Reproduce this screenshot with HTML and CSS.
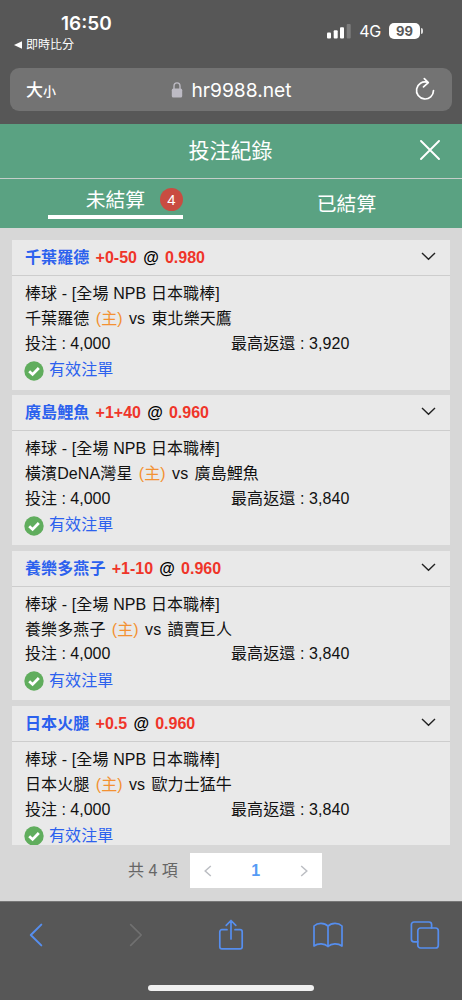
FILE: index.html
```html
<!DOCTYPE html>
<html lang="zh-Hant">
<head>
<meta charset="utf-8">
<meta name="viewport" content="width=device-width, initial-scale=1">
<title>投注紀錄</title>
<link rel="stylesheet" href="styles.css">
</head>
<body>
<div class="phone">
  <header class="browser-top">
    <div class="status">
      <div class="status-left">
        <div class="clock">16:50</div>
        <div class="back-app"><svg width="8" height="8" viewBox="0 0 8 8"><path d="M0 4 8 .3v7.4z" fill="#fff"/></svg><span>即時比分</span></div>
      </div>
      <div class="status-right">
        <svg class="signal" width="24" height="15" viewBox="0 0 24 15"><g fill="#fff"><rect y="8.5" width="4" height="6" rx="1"/><rect x="6.7" y="6.2" width="4" height="8.3" rx="1"/><rect x="13" y="3.3" width="4" height="11.2" rx="1"/></g><rect x="19.7" width="4" height="14.5" rx="1" fill="#7d7d7d"/></svg>
        <span class="network">4G</span>
        <span class="battery">99</span><span class="battery-tip"></span>
      </div>
    </div>
    <div class="address">
      <div class="text-size"><span>大</span><small>小</small></div>
      <div class="site">
        <svg width="12" height="16" viewBox="0 0 12 16"><rect x=".8" y="6.6" width="10.4" height="8.9" rx="1.6" fill="#bdbbc4"/><path d="M3 7V4.200a3 3.300 0 0 1 6 0V7" fill="none" stroke="#bdbbc4" stroke-width="1.4"/></svg>
        <span>hr9988.net</span>
      </div>
      <svg class="reload" width="20" height="24" viewBox="0 0 20 24"><path d="M12.300 5.300A8.500 8.500 0 1 0 18.500 13.500M9.300 1.600l4 4-4.800 4.300" fill="none" stroke="#fff" stroke-width="1.7" stroke-linecap="round" stroke-linejoin="round"/></svg>
    </div>
  </header>

  <div class="title-bar">
    <h1>投注紀錄</h1>
    <svg class="close" width="20" height="20" viewBox="0 0 20 20"><path d="M1 1l18 18M19 1 1 19" stroke="#fff" stroke-width="1.9" stroke-linecap="round"/></svg>
  </div>
  <nav class="tabs">
    <div class="tab"><div class="tab-active"><span>未結算</span><b class="count">4</b></div></div>
    <div class="tab tab-idle">已結算</div>
  </nav>

  <main class="records">
    <div class="list">
      <article class="card">
        <div class="card-head"><span class="pick">千葉羅德</span><span class="odds">+0-50</span><span class="at">@</span><span class="odds">0.980</span><svg class="chevron" width="15" height="9" viewBox="0 0 15 9"><path d="M1 1l6.5 6.3L14 1"/></svg></div>
        <div class="card-body">
          <div class="row league">棒球 - [全場 NPB 日本職棒]</div>
          <div class="row match"><span>千葉羅德</span><span class="home">(主)</span><span>vs</span><span>東北樂天鷹</span></div>
          <div class="row stake"><span>投注 : 4,000</span><span>最高返還 : 3,920</span></div>
          <div class="row valid"><svg width="20" height="20" viewBox="0 0 20 20"><circle cx="10" cy="10" r="9.7"/><path d="M5.2 10.2l3.4 3.2 6.2-6.3"/></svg><span>有效注單</span></div>
        </div>
      </article>
      <article class="card">
        <div class="card-head"><span class="pick">廣島鯉魚</span><span class="odds">+1+40</span><span class="at">@</span><span class="odds">0.960</span><svg class="chevron" width="15" height="9" viewBox="0 0 15 9"><path d="M1 1l6.5 6.3L14 1"/></svg></div>
        <div class="card-body">
          <div class="row league">棒球 - [全場 NPB 日本職棒]</div>
          <div class="row match"><span>橫濱DeNA灣星</span><span class="home">(主)</span><span>vs</span><span>廣島鯉魚</span></div>
          <div class="row stake"><span>投注 : 4,000</span><span>最高返還 : 3,840</span></div>
          <div class="row valid"><svg width="20" height="20" viewBox="0 0 20 20"><circle cx="10" cy="10" r="9.7"/><path d="M5.2 10.2l3.4 3.2 6.2-6.3"/></svg><span>有效注單</span></div>
        </div>
      </article>
      <article class="card">
        <div class="card-head"><span class="pick">養樂多燕子</span><span class="odds">+1-10</span><span class="at">@</span><span class="odds">0.960</span><svg class="chevron" width="15" height="9" viewBox="0 0 15 9"><path d="M1 1l6.5 6.3L14 1"/></svg></div>
        <div class="card-body">
          <div class="row league">棒球 - [全場 NPB 日本職棒]</div>
          <div class="row match"><span>養樂多燕子</span><span class="home">(主)</span><span>vs</span><span>讀賣巨人</span></div>
          <div class="row stake"><span>投注 : 4,000</span><span>最高返還 : 3,840</span></div>
          <div class="row valid"><svg width="20" height="20" viewBox="0 0 20 20"><circle cx="10" cy="10" r="9.7"/><path d="M5.2 10.2l3.4 3.2 6.2-6.3"/></svg><span>有效注單</span></div>
        </div>
      </article>
      <article class="card">
        <div class="card-head"><span class="pick">日本火腿</span><span class="odds">+0.5</span><span class="at">@</span><span class="odds">0.960</span><svg class="chevron" width="15" height="9" viewBox="0 0 15 9"><path d="M1 1l6.5 6.3L14 1"/></svg></div>
        <div class="card-body">
          <div class="row league">棒球 - [全場 NPB 日本職棒]</div>
          <div class="row match"><span>日本火腿</span><span class="home">(主)</span><span>vs</span><span>歐力士猛牛</span></div>
          <div class="row stake"><span>投注 : 4,000</span><span>最高返還 : 3,840</span></div>
          <div class="row valid"><svg width="20" height="20" viewBox="0 0 20 20"><circle cx="10" cy="10" r="9.7"/><path d="M5.2 10.2l3.4 3.2 6.2-6.3"/></svg><span>有效注單</span></div>
        </div>
      </article>
    </div>
    <div class="pagination">
      <span class="total">共 4 項</span>
      <div class="pager">
        <svg width="8" height="12" viewBox="0 0 8 12"><path d="M6.8 1 1.2 6l5.6 5"/></svg>
        <b>1</b>
        <svg width="8" height="12" viewBox="0 0 8 12"><path d="M1.2 1l5.6 5-5.6 5"/></svg>
      </div>
    </div>
  </main>

  <footer class="browser-bottom">
    <div class="tools">
      <svg width="14" height="24" viewBox="0 0 14 24"><path class="back" d="M12.300 1.600 1.800 12l10.500 10.400"/></svg>
      <svg class="forward" width="14" height="24" viewBox="0 0 14 24"><path d="M1.700 1.600 12.200 12 1.700 22.400"/></svg>
      <svg class="share" width="26" height="32" viewBox="0 0 26 32"><path d="M9 10.700H4a2.200 2.200 0 0 0-2.200 2.200v14.800A2.200 2.200 0 0 0 4 29.900h18a2.200 2.200 0 0 0 2.200-2.200V12.900A2.200 2.200 0 0 0 22 10.700h-5M13 20V1.500M8.200 6.300 13 1.500l4.800 4.800"/></svg>
      <svg class="book" width="30" height="26" viewBox="0 0 30 26"><path d="M15 4.200C11.500.4 4.500.6 1 4v20c4-3 10.500-3 14 .5 3.500-3.500 10-3.500 14-.5V4C25.500.6 18.500.4 15 4.200v20.300"/></svg>
      <svg class="pages" width="30" height="28" viewBox="0 0 30 28"><path d="M7.800 20.800H4A2.600 2.600 0 0 1 1.400 18.200V3.600A2.600 2.600 0 0 1 4 1h15a2.600 2.600 0 0 1 2.600 2.600V7"/><rect x="7.800" y="7" width="20.500" height="20" rx="2.800"/></svg>
    </div>
    <div class="home-indicator"></div>
  </footer>
</div>
</body>
</html>
```
FILE: styles.css
```css
* { box-sizing: border-box; }
body {
  margin: 0;
  font-family: "Liberation Sans", "Noto Sans CJK TC", sans-serif;
  color: #111;
}
svg { display: block; flex: none; }
.phone {
  width: 462px;
  height: 1000px;
  display: flex;
  flex-direction: column;
  overflow: hidden;
  background: #575757;
}
.browser-top {
  flex: none;
  height: 124px;
  padding: 0 10px;
  color: #fff;
  font-family: Inter, "Noto Sans CJK TC", sans-serif;
}
.status {
  height: 68px;
  display: flex;
  justify-content: space-between;
}
.clock {
  padding: 12px 0 0 51px;
  font-size: 19px;
  line-height: 23px;
  font-weight: 600;
}
.back-app {
  display: flex;
  align-items: center;
  gap: 4px;
  padding: 1px 0 0 4px;
  font-size: 12px;
  line-height: 18px;
}
.status-right {
  display: flex;
  align-items: center;
  height: 16px;
  margin: 23px 29px 0 0;
}
.network { margin-left: 8px; font-size: 16px; letter-spacing: -.3px; }
.battery {
  width: 31px;
  height: 16px;
  margin-left: 8px;
  border-radius: 5px;
  background: #fff;
  color: #575757;
  font-size: 13px;
  line-height: 16px;
  font-weight: 700;
  text-align: center;
}
.battery-tip { width: 2px; height: 6px; margin-left: 1px; border-radius: 0 2px 2px 0; background: #ddd; }
.address {
  height: 43px;
  border-radius: 9px;
  background: #737373;
  display: grid;
  grid-template-columns: 100px 1fr 100px;
  align-items: center;
}
.text-size { padding: 2px 0 0 16px; font-size: 17px; line-height: 24px; font-weight: 500; }
.text-size small { font-size: 13px; }
.site { display: flex; align-items: center; justify-content: center; gap: 8px; padding-left: 1px; font-size: 19.2px; }
.reload { justify-self: end; margin: 0 17px 2px 0; }
.title-bar {
  flex: none;
  height: 55px;
  display: grid;
  grid-template-columns: 1fr auto 1fr;
  align-items: center;
  padding: 0 22px;
  border-bottom: 1px solid #c4cec9;
  background: #5aa282;
  color: #fff;
}
.title-bar h1 { grid-column: 2; margin: 0 1px 0 0; font-size: 21px; line-height: 30px; font-weight: 400; }
.close { justify-self: end; margin-bottom: 2px; }
.tabs {
  flex: none;
  height: 49px;
  display: grid;
  grid-template-columns: 1fr 1fr;
  background: #5aa282;
  color: #fff;
  font-size: 19.800px;
}
.tab { display: flex; justify-content: center; }
.tab-active {
  width: 135px;
  height: 40px;
  border-bottom: 4px solid #fff;
  display: flex;
  align-items: center;
  justify-content: flex-end;
  gap: 15px;
  padding-top: 4px;
}
.tab-active span { margin-top: -2px; }
.count {
  width: 23px;
  height: 23px;
  border-radius: 50%;
  background: #c94c41;
  font-size: 15px;
  line-height: 23px;
  font-weight: 400;
  text-align: center;
}
.tab-idle { align-items: center; padding-bottom: 3px; }
.records {
  flex: none;
  height: 673px;
  padding: 12px 12px 0;
  background: #d7d7d7;
}
.list {
  height: 605px;
  overflow: hidden;
  display: flex;
  flex-direction: column;
  gap: 5.500px;
}
.card {
  flex: none;
  height: 149.800px;
  background: #e9e9e9;
  font-size: 16px;
  line-height: 24px;
}
.card-head {
  height: 36px;
  display: flex;
  align-items: baseline;
  gap: 6.200px;
  padding: 6px 14px 0 13px;
  border-bottom: 1px solid #cdcdcd;
  font-weight: 700;
}
.pick { color: #2c61ee; letter-spacing: .1px; }
.odds { color: #ef3529; }
.at { color: #000; }
.chevron { margin-left: auto; align-self: flex-start; margin-top: 6px; }
.chevron path { fill: none; stroke: #222; stroke-width: 1.400; }
.card-body { padding: 6.200px 13px 0; }
.row { display: flex; align-items: baseline; height: 24.800px; white-space: pre; }
.league { letter-spacing: .08px; word-spacing: .1px; }
.match { gap: 6.300px; letter-spacing: .1px; }
.home { color: #f39132; }
.stake { display: grid; grid-template-columns: 206px 1fr; }
.stake span + span { letter-spacing: .1px; }
.row.valid { align-items: center; height: 27px; gap: 5px; margin-left: -1px; color: #2c61ee; }
.valid span { letter-spacing: .1px; }
.valid svg { margin-top: 1px; }
.valid circle { fill: #60ad5d; }
.valid path { fill: none; stroke: #fff; stroke-width: 2.800; }
.pagination {
  display: flex;
  align-items: center;
  gap: 12px;
  padding: 8px 0 0 116px;
  color: #666;
  font-size: 16px;
}
.total { margin-top: -3px; }
.pager {
  width: 132px;
  height: 35px;
  display: flex;
  align-items: center;
  justify-content: space-between;
  padding: 0 14px;
  background: #fff;
}
.pager b { color: #559bf5; }
.pager path { fill: none; stroke: #bcbec3; stroke-width: 1.500; }
.browser-bottom {
  flex: none;
  height: 99px;
  border-top: 1px solid #777;
  display: flex;
  flex-direction: column;
  align-items: center;
}
.tools {
  width: 100%;
  height: 66px;
  display: flex;
  align-items: center;
  padding-left: 29px;
}
.tools path, .tools rect { fill: none; stroke: #568eee; stroke-width: 1.700; stroke-linecap: round; stroke-linejoin: round; }
.tools .back { stroke-width: 2; }
.tools .forward path { stroke: #707070; }
.forward { margin-left: 86px; }
.share { margin-left: 75px; }
.book { margin-left: 69px; }
.pages { margin-left: 67px; }
.home-indicator { width: 166px; height: 6px; margin-top: 17px; border-radius: 3px; background: #f0f0f0; }
```
